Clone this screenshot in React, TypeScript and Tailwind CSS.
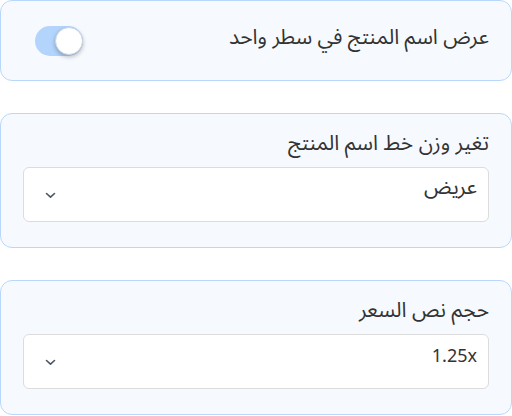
import { useState } from 'react';

function Chevron() {
  return (
    <svg width="11" height="7" viewBox="0 0 11 7" fill="none">
      <path d="M1.5 1.5 L5.5 5.2 L9.5 1.5" stroke="#4b5563" strokeWidth="1.6" strokeLinecap="round" strokeLinejoin="round" />
    </svg>
  );
}

function SelectBox({ value, latin }: { value: string; latin?: boolean }) {
  return (
    <div className="flex h-[55px] items-start justify-between rounded-md border border-[#dcdcdc] bg-white pr-[11px] pl-[21px]">
      <span className={`text-[#333] ${latin ? 'pt-[6px] text-[18px] leading-[28px]' : 'pt-[4px] text-[21px] leading-[28px]'}`}>{value}</span>
      <span className="self-center pt-[1px]">
        <Chevron />
      </span>
    </div>
  );
}

export default function App() {
  const [oneLine, setOneLine] = useState(true);

  return (
    <div dir="rtl" className="flex w-[512px] flex-col gap-8 bg-white" style={{ fontFamily: '"Noto Sans", "Noto Sans Arabic", sans-serif' }}>
      {/* Single line toggle */}
      <div className="flex h-[81px] items-center justify-between rounded-xl border border-[#b9d7fb] bg-[#f6faff] px-[22px]">
        <span className="mb-[10px] text-[21px] leading-[28px] text-[#333]">عرض اسم المنتج في سطر واحد</span>
        <button
          onClick={() => setOneLine(!oneLine)}
          className={`relative ml-[12px] h-[30px] w-[48px] rounded-full ${oneLine ? 'bg-[#b3d4fb]' : 'bg-gray-200'}`}
        >
          <span
            className={`absolute top-[1px] h-[28px] w-[28px] rounded-full border border-[#c9d6e6] bg-white shadow-[0_2px_4px_rgba(0,0,0,0.25)] ${oneLine ? 'left-[20px]' : 'left-[1px]'}`}
          />
        </button>
      </div>

      {/* Font weight */}
      <div className="flex flex-col rounded-xl border border-[#b9d7fb] bg-[#f6faff] px-[22px] pt-[14px] pb-[25px]">
        <span className="mb-[11px] text-[21px] leading-[28px] text-[#333]">تغير وزن خط اسم المنتج</span>
        <SelectBox value="عريض" />
      </div>

      {/* Price text size */}
      <div className="flex flex-col rounded-xl border border-[#b9d7fb] bg-[#f6faff] px-[22px] pt-[14px] pb-[25px]">
        <span className="mb-[11px] text-[21px] leading-[28px] text-[#333]">حجم نص السعر</span>
        <SelectBox value="1.25x" latin />
      </div>
    </div>
  );
}
